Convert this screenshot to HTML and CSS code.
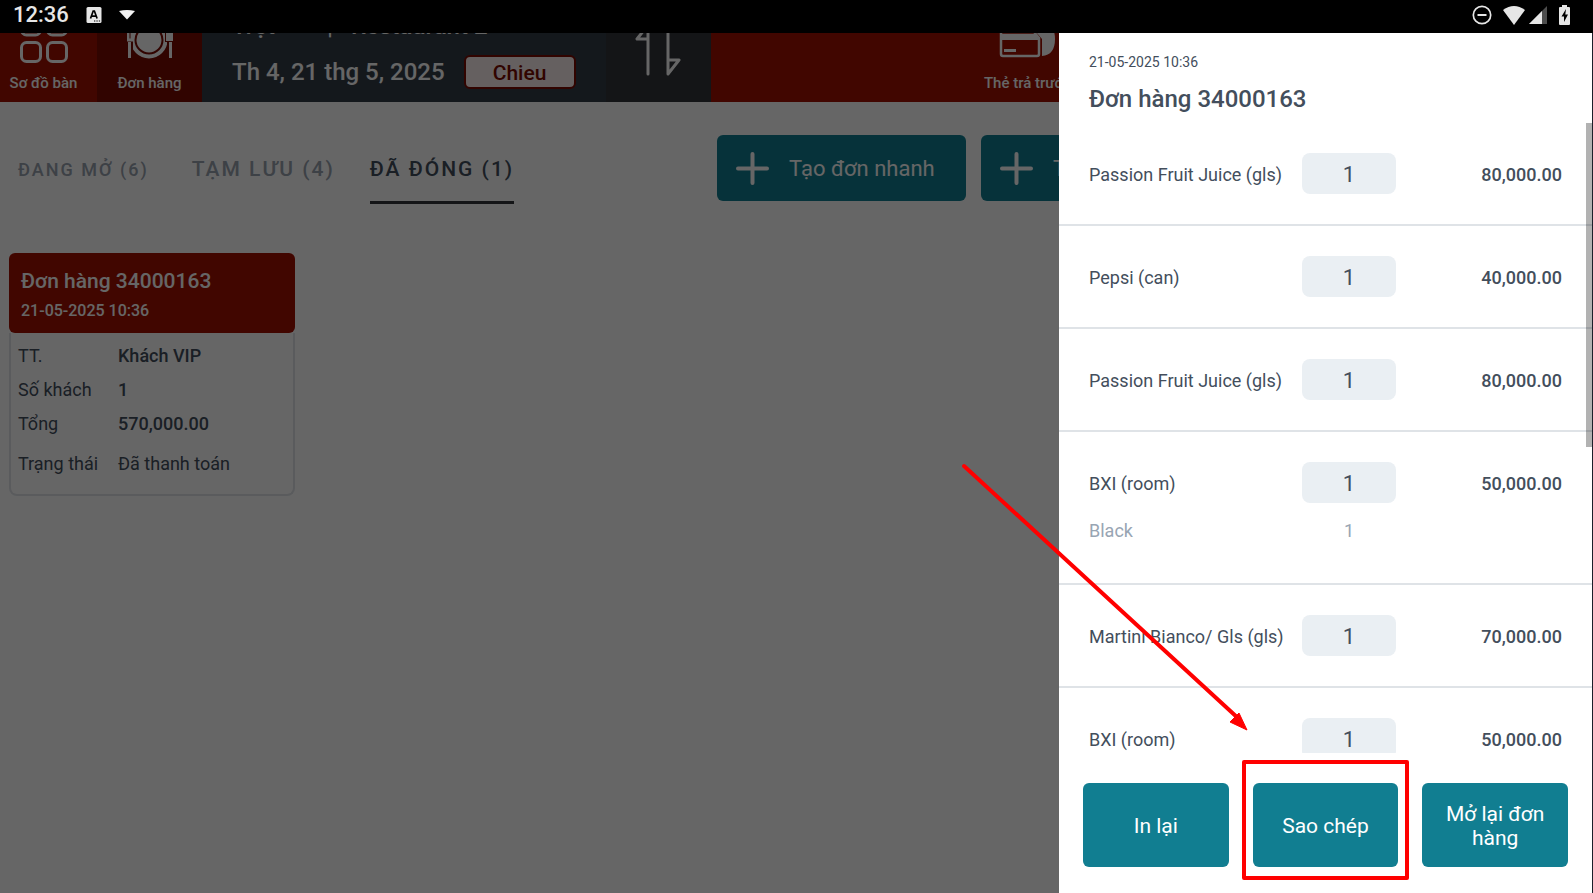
FILE: index.html
```html
<!DOCTYPE html>
<html lang="vi">
<head>
<meta charset="utf-8">
<title>Đơn hàng</title>
<link rel="stylesheet" href="styles.css">
</head>
<body>
<div class="screen">
  <header class="status-bar">
    <div class="status-left">
      <span class="clock">12:36</span>
      <svg width="16" height="16" viewBox="0 0 16 16" aria-hidden="true"><rect x="0.5" width="15" height="16" rx="1.5" fill="#e6e6e6"/><path d="M4.500 11.500 7.200 4h1.200l2.700 7.500M5.600 9.200h4.400" fill="none" stroke="#000" stroke-width="1.700"/><path d="M8 14h1.300M10.400 14h1.300M12.800 14h1.300" stroke="#000" stroke-width="1.200"/></svg>
      <svg width="16" height="10" viewBox="0 0 16 10" aria-hidden="true"><path d="M0 1Q8-1 16 1L8 9.500Z" fill="#f2f2f2"/></svg>
    </div>
    <div class="status-right">
      <svg width="20" height="20" viewBox="0 0 20 20" aria-hidden="true"><circle cx="10" cy="10" r="8.700" fill="none" stroke="#e6e6e6" stroke-width="1.700"/><path d="M5.500 10h9" stroke="#e6e6e6" stroke-width="2"/></svg>
      <svg class="wifi" width="22" height="19" viewBox="0 0 22 19" aria-hidden="true"><path d="M0 4Q11-4 22 4L11 19Z" fill="#e6e6e6"/></svg>
      <svg class="signal" width="18" height="18" viewBox="0 0 18 18" aria-hidden="true"><path d="M0 18 18 0V18Z" fill="#4d4d4d"/><path d="M0 18 13 5V18Z" fill="#e6e6e6"/></svg>
      <svg class="battery" width="11" height="20" viewBox="0 0 11 20" aria-hidden="true"><path d="M3 0h5v2h2q1 0 1 1v16q0 1-1 1H1q-1 0-1-1V3q0-1 1-1h2z" fill="#e6e6e6"/><path d="M7 4 2.500 11.500H5V17l4-7.500H6.300z" fill="#000"/></svg>
    </div>
  </header>

  <div class="workspace">
    <main class="app">
      <nav class="topbar">
        <a class="nav-item nav-tables" href="#">
          <svg width="50" height="50" viewBox="0 0 50 50" fill="none" stroke="#fff" stroke-width="3" aria-hidden="true"><rect x="2.500" y="1" width="19" height="19" rx="5"/><rect x="28.500" y="1" width="19" height="19" rx="5"/><rect x="2.500" y="27.500" width="19" height="19" rx="5"/><rect x="28.500" y="27.500" width="19" height="19" rx="5"/></svg>
          <span>Sơ đồ bàn</span>
        </a>
        <a class="nav-item nav-orders" href="#">
          <svg width="46" height="50" viewBox="0 0 46 50" aria-hidden="true"><circle cx="22" cy="25" r="12.500" fill="#fff"/><circle cx="22" cy="25" r="16.500" fill="none" stroke="#fff" stroke-width="4"/><path d="M0 14h6v30H0zM38 11h8v33h-6V27h-2z" fill="#7b0a00"/><path d="M1 14v11h4V14M2.500 27v16M43.500 27v16" fill="none" stroke="#fff" stroke-width="3"/><path d="M39 11h7v15h-7z" fill="#fff"/></svg>
          <span>Đơn hàng</span>
        </a>
        <div class="shift">
          <div class="shift-place"><span class="floor">Trệt</span><span class="bar">|</span><span>Restaurant 2</span></div>
          <div class="shift-date"><span>Th 4, 21 thg 5, 2025</span><span class="badge">Chieu</span></div>
        </div>
        <button class="swap" type="button" aria-label="Đổi">
          <svg width="46" height="60" viewBox="0 0 46 60" fill="none" stroke="#fff" stroke-width="3" stroke-linecap="round" stroke-linejoin="round" aria-hidden="true"><path d="M13 57V8L2 22h11M33 8v49l11-14H33"/></svg>
        </button>
        <div class="nav-rest">
          <a class="nav-item" href="#">
            <svg width="56" height="50" viewBox="0 0 56 50" aria-hidden="true"><path d="M14 6h28q14 2 14 18t-13 17V24l-6-7H2z" fill="#fff"/><path d="M2 17h33l5 6v16q0 2-2 2H4q-2 0-2-2z" fill="none" stroke="#fff" stroke-width="2.500"/><path d="M2 19h35l3 6H2zM5 34h12v3H5z" fill="#fff"/></svg>
            <span>Thẻ trả trước</span>
          </a>
        </div>
      </nav>

      <div class="toolbar">
        <div class="tabs">
          <button class="tab tab-small" type="button">ĐANG MỞ (6)</button>
          <button class="tab" type="button">TẠM LƯU (4)</button>
          <button class="tab tab-active" type="button">ĐÃ ĐÓNG (1)</button>
        </div>
        <div class="create">
          <button class="create-button" type="button"><svg width="33" height="33" viewBox="0 0 33 33" stroke="#fff" stroke-width="4" stroke-linecap="round" aria-hidden="true"><path d="M2 16.500h29M16.500 2v29"/></svg>Tạo đơn nhanh</button>
          <button class="create-button" type="button"><svg width="33" height="33" viewBox="0 0 33 33" stroke="#fff" stroke-width="4" stroke-linecap="round" aria-hidden="true"><path d="M2 16.500h29M16.500 2v29"/></svg>Tạo</button>
        </div>
      </div>

      <article class="order-card">
        <header class="order-head">
          <h2>Đơn hàng 34000163</h2>
          <p>21-05-2025 10:36</p>
        </header>
        <dl class="order-info">
          <dt>TT.</dt><dd>Khách VIP</dd>
          <dt>Số khách</dt><dd>1</dd>
          <dt>Tổng</dt><dd>570,000.00</dd>
          <dt class="state">Trạng thái</dt><dd class="state">Đã thanh toán</dd>
        </dl>
      </article>
    </main>

    <div class="scrim"></div>

    <aside class="drawer">
      <header class="drawer-head">
        <p>21-05-2025 10:36</p>
        <h1>Đơn hàng 34000163</h1>
      </header>
      <div class="lines">
        <ul class="line-list">
          <li class="line"><span>Passion Fruit Juice (gls)</span><span class="qty">1</span><span class="price">80,000.00</span></li>
          <li class="line"><span>Pepsi (can)</span><span class="qty">1</span><span class="price">40,000.00</span></li>
          <li class="line"><span>Passion Fruit Juice (gls)</span><span class="qty">1</span><span class="price">80,000.00</span></li>
          <li class="line"><span>BXI (room)</span><span class="qty">1</span><span class="price">50,000.00</span><span class="extra">Black</span><span class="extra extra-qty">1</span></li>
          <li class="line"><span>Martini Bianco/ Gls (gls)</span><span class="qty">1</span><span class="price">70,000.00</span></li>
          <li class="line"><span>BXI (room)</span><span class="qty">1</span><span class="price">50,000.00</span></li>
        </ul>
        <div class="scroll-thumb"></div>
      </div>
      <footer class="actions">
        <button class="action" type="button">In lại</button>
        <button class="action action-marked" type="button">Sao chép</button>
        <button class="action" type="button">Mở lại đơn hàng</button>
      </footer>
      <svg class="pointer" width="300" height="280" viewBox="0 0 300 280" aria-hidden="true"><path d="M5 6 280 259" stroke="#f00" stroke-width="4" stroke-linecap="round"/><path d="M288 270 271 262 280 253Z" fill="#f00" stroke="#f00"/></svg>
    </aside>
  </div>
</div>
</body>
</html>
```
FILE: styles.css
```css
* { box-sizing: border-box; margin: 0; padding: 0; }

body {
  font-family: Roboto, "Noto Sans", sans-serif;
  color: #434e5c;
  background: #000;
}

button {
  font: inherit;
  color: inherit;
  background: none;
  border: 0;
}

a { color: inherit; text-decoration: none; }
ul { list-style: none; }
svg { display: block; flex: none; }

.screen {
  display: flex;
  flex-direction: column;
  height: 100vh;
  overflow: hidden;
}

.status-bar {
  display: flex;
  justify-content: space-between;
  align-items: center;
  flex: none;
  height: 33px;
  padding: 0 23px 3px 13px;
  background: #000;
  color: #e6e6e6;
}

.status-left, .status-right { display: flex; align-items: center; }
.status-left { gap: 17px; }
.clock { font-size: 22px; font-weight: 500; line-height: 30px; }
.wifi { margin-left: 11px; }
.signal { margin-left: 4px; }
.battery { margin-left: 12px; }

.workspace {
  position: relative;
  display: flex;
  flex: 1;
  min-height: 0;
}

.app { flex: 1; min-width: 0; overflow: hidden; background: #fff; }

.topbar {
  display: flex;
  align-items: flex-end;
  height: 69px;
  overflow: hidden;
  background: #a30f00;
  color: #fff;
}

.nav-item {
  display: flex;
  flex-direction: column;
  align-items: center;
  justify-content: flex-end;
  gap: 8px;
  height: 100px;
  padding-bottom: 9px;
  font-size: 15px;
  font-weight: 500;
  line-height: 20px;
  white-space: nowrap;
}

.nav-tables { width: 97px; padding-right: 10px; }
.nav-orders { width: 105px; background: #7b0a00; }

.shift {
  display: flex;
  flex-direction: column;
  justify-content: flex-end;
  gap: 15px;
  width: 404px;
  height: 100px;
  padding: 0 30px 13px;
  background: #343c48;
  font-size: 24px;
  font-weight: 500;
}

.shift-place { display: flex; line-height: 28px; }
.floor { width: 95px; }
.bar { width: 24px; }
.shift-date { display: flex; align-items: center; gap: 19px; line-height: 34px; white-space: nowrap; }

.badge {
  width: 112px;
  height: 34px;
  border: 2px solid #7b0a00;
  border-radius: 6px;
  background: #fdefef;
  color: #7b0a00;
  font-size: 21px;
  line-height: 32px;
  text-align: center;
}

.swap {
  display: flex;
  align-items: flex-end;
  justify-content: center;
  width: 105px;
  height: 100px;
  padding: 0 2px 25px 0;
  background: #32353a;
}

.nav-rest { flex: 1; display: flex; justify-content: flex-end; padding-right: 522px; }

.toolbar {
  display: flex;
  align-items: flex-start;
  padding: 33px 0 0 18px;
}

.tabs { display: flex; flex: none; gap: 35px; width: 699px; }

.tab {
  height: 69px;
  padding-top: 2px;
  border-bottom: 3px solid transparent;
  color: #98a2ae;
  font-size: 21px;
  font-weight: 500;
  letter-spacing: 2px;
  white-space: nowrap;
}

.tab-small { margin-right: 8px; font-size: 18px; }
.tab-active { border-color: #32353a; color: #434e5c; }

.create { display: flex; flex: none; gap: 15px; }

.create-button {
  display: flex;
  align-items: center;
  gap: 20px;
  width: 249px;
  height: 66px;
  padding-left: 19px;
  border-radius: 6px;
  background: #117e91;
  color: #fff;
  font-size: 22px;
  white-space: nowrap;
}

.order-card {
  width: 286px;
  margin: 49px 0 0 9px;
  border-radius: 8px;
}

.order-head {
  height: 80px;
  padding: 15px 12px;
  border-radius: 6px;
  background: #a30f00;
  color: #fff;
}

.order-head h2 { font-size: 21px; font-weight: 500; line-height: 26px; }
.order-head p { margin-top: 6px; font-size: 16px; font-weight: 500; line-height: 22px; }

.order-info {
  display: grid;
  grid-template-columns: 100px 1fr;
  row-gap: 10px;
  padding: 11px 7px 18px;
  border: 2px solid #e0e4e9;
  border-top: 0;
  border-radius: 0 0 8px 8px;
  font-size: 18px;
  line-height: 24px;
}

.order-info dd { font-weight: 500; }
.order-info .state { margin-top: 6px; font-weight: 400; }

.scrim {
  position: absolute;
  inset: 0;
  background: rgba(0, 0, 0, 0.6);
}

.drawer {
  position: absolute;
  top: 0;
  right: 0;
  bottom: 0;
  display: flex;
  flex-direction: column;
  width: 534px;
  border-right: 1px solid #1b202b;
  background: #fff;
}

.drawer-head { height: 90px; padding: 18px 30px 0; }
.drawer-head p { font-size: 14px; line-height: 22px; }
.drawer-head h1 { margin-top: 10px; font-size: 24px; font-weight: 500; line-height: 32px; }

.lines { position: relative; flex: 1; min-height: 0; overflow: hidden; }

.line {
  display: grid;
  grid-template-columns: 213px 94px 1fr;
  grid-template-rows: 41px;
  row-gap: 16px;
  padding: 30px;
  border-bottom: 2px solid #dfe3e7;
  font-size: 18px;
  line-height: 43px;
  white-space: nowrap;
}

.qty {
  border-radius: 8px;
  background: #eaeff3;
  font-size: 22px;
  text-align: center;
}

.price { font-weight: 500; text-align: right; }
.extra { height: 34px; color: #98a5b3; line-height: 24px; }
.extra-qty { text-align: center; }

.scroll-thumb {
  position: absolute;
  top: 0;
  right: 0;
  width: 6px;
  height: 324px;
  background: rgba(0, 0, 0, 0.3);
}

.actions {
  display: grid;
  grid-template-columns: repeat(3, 1fr);
  gap: 24px;
  padding: 30px 24px 26px;
}

.action {
  position: relative;
  height: 84px;
  padding: 2px 16px 0;
  border-radius: 6px;
  background: #117e91;
  color: #fff;
  font-size: 21px;
  line-height: 24px;
}

.action-marked::after {
  content: "";
  position: absolute;
  inset: -23px -11px -13px;
  border: 4px solid #f00;
  border-radius: 2px;
}

.pointer { position: absolute; bottom: 153px; left: -100px; }
```
